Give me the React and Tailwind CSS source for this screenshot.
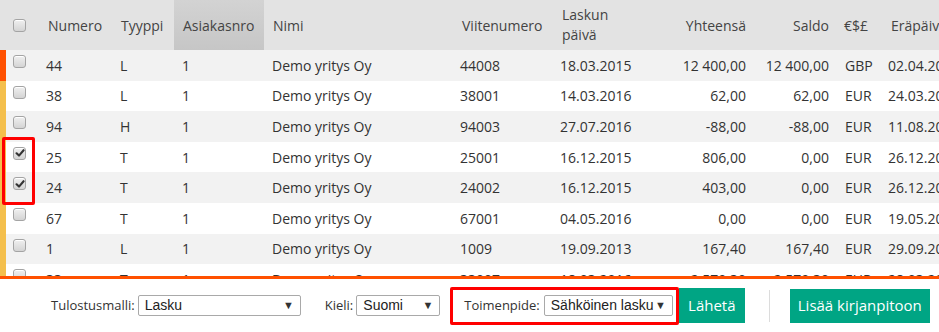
import React from 'react';

const rows = [
  { no: '44', type: 'L', cust: '1', name: 'Demo yritys Oy', ref: '44008', date: '18.03.2015', total: '12 400,00', saldo: '12 400,00', cur: 'GBP', due: '02.04.2015', strip: 'border-l-[#ff5000]' },
  { no: '38', type: 'L', cust: '1', name: 'Demo yritys Oy', ref: '38001', date: '14.03.2016', total: '62,00', saldo: '62,00', cur: 'EUR', due: '24.03.2016' },
  { no: '94', type: 'H', cust: '1', name: 'Demo yritys Oy', ref: '94003', date: '27.07.2016', total: '-88,00', saldo: '-88,00', cur: 'EUR', due: '11.08.2016' },
  { no: '25', type: 'T', cust: '1', name: 'Demo yritys Oy', ref: '25001', date: '16.12.2015', total: '806,00', saldo: '0,00', cur: 'EUR', due: '26.12.2015', checked: true },
  { no: '24', type: 'T', cust: '1', name: 'Demo yritys Oy', ref: '24002', date: '16.12.2015', total: '403,00', saldo: '0,00', cur: 'EUR', due: '26.12.2015', checked: true },
  { no: '67', type: 'T', cust: '1', name: 'Demo yritys Oy', ref: '67001', date: '04.05.2016', total: '0,00', saldo: '0,00', cur: 'EUR', due: '19.05.2016' },
  { no: '1', type: 'L', cust: '1', name: 'Demo yritys Oy', ref: '1009', date: '19.09.2013', total: '167,40', saldo: '167,40', cur: 'EUR', due: '29.09.2013' },
  { no: '33', type: 'T', cust: '1', name: 'Demo yritys Oy', ref: '33007', date: '18.03.2016', total: '2 579,30', saldo: '2 579,30', cur: 'EUR', due: '28.03.2016' },
];

const Checkbox = ({ checked }) => (
  <span className="w-[13px] h-[13px] rounded-[3px] border border-[#a4a4a4] bg-linear-to-b from-[#f0f0f0] to-[#d4d4d4] flex items-center justify-center shadow-[inset_0_1px_0_#fff]">
    {checked && (
      <svg width="10" height="10" viewBox="0 0 10 10">
        <path d="M1.6 5.3 L4 7.6 L8.6 2.2" stroke="#333" strokeWidth="2.1" fill="none" strokeLinecap="round" strokeLinejoin="round" />
      </svg>
    )}
  </span>
);

const Select = ({ value, width }) => (
  <div className={`${width} h-[21px] border border-[#a9a9a9] rounded-[2px] bg-white flex items-center justify-between pl-[6px] pr-[6px] font-['Liberation_Sans',Arial,sans-serif] text-[14px] text-[#222]`}>
    <span>{value}</span>
    <span className="text-[11px] text-[#333]">▼</span>
  </div>
);

export default function App() {
  return (
    <div className="w-[939px] h-[332px] overflow-hidden bg-white font-['Open_Sans',sans-serif] text-[14px] text-[#333] relative">
      <div className="w-[960px] h-[276px] overflow-hidden">
        <div className="flex h-[50px] bg-[#e3e3e3] text-[#444]">
          <div className="w-[38px] pl-[13px] flex items-center"><Checkbox /></div>
          <div className="w-[74px] pl-[10px] flex items-center">Numero</div>
          <div className="w-[62px] pl-[9px] flex items-center">Tyyppi</div>
          <div className="w-[90px] pl-[9px] flex items-center bg-linear-to-b from-[#d3d3d3] to-[#c6c6c6]">Asiakasnro</div>
          <div className="w-[188px] pl-[9px] flex items-center">Nimi</div>
          <div className="w-[100px] pl-[10px] flex items-center">Viitenumero</div>
          <div className="w-[88px] pl-[10px] flex items-center leading-[20px]">Laskun<br />päivä</div>
          <div className="w-[114px] pr-[8px] flex items-center justify-end">Yhteensä</div>
          <div className="w-[83px] pr-[8px] flex items-center justify-end">Saldo</div>
          <div className="w-[43px] pl-[7px] flex items-center">€$£</div>
          <div className="w-[80px] pl-[11px] flex items-center">Eräpäivä</div>
        </div>
        {rows.map((r, i) => (
          <div
            key={i}
            className={`flex h-[30.6px] border-l-[6px] ${r.strip || 'border-l-[#f4bf4c]'} ${i % 2 === 0 ? 'bg-[#f2f2f2]' : 'bg-white'}`}
          >
            <div className="w-[32px] pl-[7px] pt-[5px]"><Checkbox checked={r.checked} /></div>
            <div className="w-[74px] pl-[8px] flex items-center">{r.no}</div>
            <div className="w-[62px] pl-[8px] flex items-center">{r.type}</div>
            <div className="w-[90px] pl-[8px] flex items-center">{r.cust}</div>
            <div className="w-[188px] pl-[8px] flex items-center">{r.name}</div>
            <div className="w-[100px] pl-[8px] flex items-center">{r.ref}</div>
            <div className="w-[88px] pl-[8px] flex items-center">{r.date}</div>
            <div className="w-[114px] pr-[8px] flex items-center justify-end">{r.total}</div>
            <div className="w-[83px] pr-[8px] flex items-center justify-end">{r.saldo}</div>
            <div className="w-[43px] pl-[8px] flex items-center">{r.cur}</div>
            <div className="w-[80px] pl-[8px] flex items-center whitespace-nowrap">{r.due}</div>
          </div>
        ))}
      </div>
      <div className="h-[3px] bg-[#ff5000]" />
      <div className="h-[53px] flex items-center pl-[51px] text-[13px] text-[#333]">
        <span className="mr-[3px]">Tulostusmalli:</span>
        <Select value="Lasku" width="w-[163px]" />
        <span className="ml-[24px] mr-[3px]">Kieli:</span>
        <Select value="Suomi" width="w-[84px]" />
        <div className="ml-[10px] h-[38px] border-[3px] border-[#ff0000] rounded-[2px] flex items-center pl-[11px] pr-[3px]">
          <span className="mr-[4px]">Toimenpide:</span>
          <Select value="Sähköinen lasku" width="w-[129px]" />
        </div>
        <button className="h-[35px] w-[66px] bg-[#00a584] text-white text-[15px] flex items-center justify-center">Lähetä</button>
        <div className="w-px h-[32px] bg-[#dcdcdc] ml-[24px] mr-[20px]" />
        <button className="h-[34px] w-[140px] bg-[#00a584] text-white text-[15px] flex items-center justify-center">Lisää kirjanpitoon</button>
      </div>
      <div className="absolute left-[2px] top-[137px] w-[33px] h-[68px] border-[3px] border-[#ff0000] rounded-[2px]" />
    </div>
  );
}
